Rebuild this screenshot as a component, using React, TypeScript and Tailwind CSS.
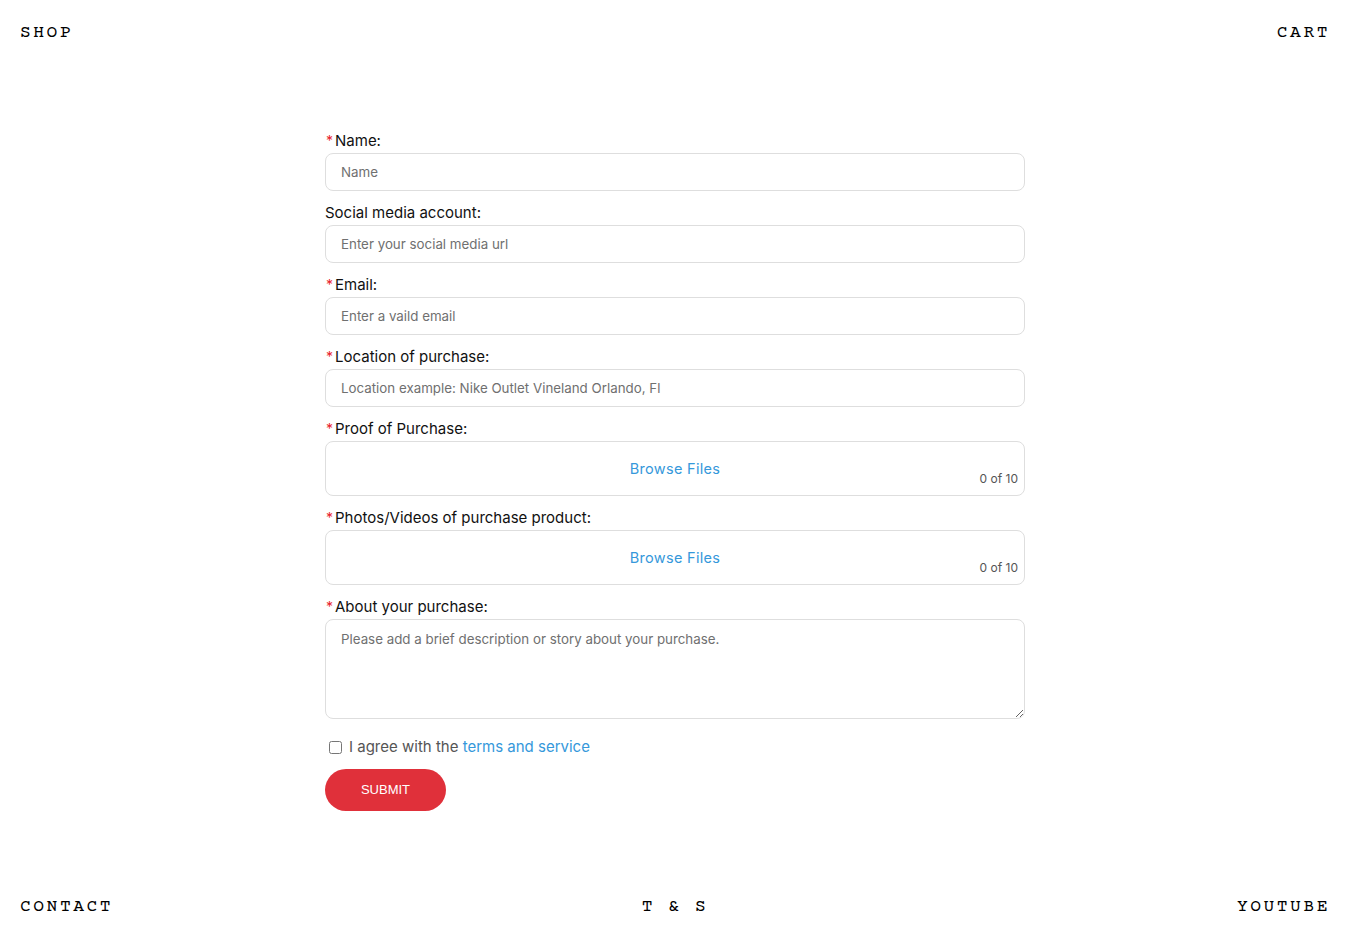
import React, { useState } from 'react';

const mono = {
  fontFamily:
    '"Courier 10 Pitch", "Courier Prime", "TeX Gyre Cursor", "Nimbus Mono", "Latin Modern Mono", "Liberation Mono", monospace',
};
const sans = { fontFamily: 'Inter, "Liberation Sans", Arial, sans-serif' };

const Label: React.FC<{ text: string; required?: boolean }> = ({ text, required }) => (
  <label className="flex items-center h-5 text-[15px] leading-5 text-[#111] mb-[2px]">
    {required && <span className="text-[#e8222b] text-[14px] leading-5 pl-[1px] mr-[2px]">*</span>}
    {text}
  </label>
);

const TextField: React.FC<{ label: string; placeholder: string; required?: boolean }> = ({
  label,
  placeholder,
  required,
}) => (
  <div className="flex flex-col">
    <Label text={label} required={required} />
    <input
      type="text"
      placeholder={placeholder}
      className="h-[38px] w-full rounded-lg border border-[#dedede] px-[15px] text-[13.333px] text-[#333] placeholder:text-[#707070] outline-none"
    />
  </div>
);

const FileField: React.FC<{ label: string }> = ({ label }) => (
  <div className="flex flex-col">
    <Label text={label} required />
    <div className="relative h-[55px] w-full rounded-lg border border-[#dedede] flex items-center justify-center">
      <button type="button" className="text-[14.5px] text-[#3598db] tracking-[0.3px]">
        Browse Files
      </button>
      <span className="absolute right-[6px] bottom-[7px] text-[12px] text-[#555]">0 of 10</span>
    </div>
  </div>
);

const navLink = 'text-[18px] leading-[22px] tracking-[2.5px] text-black';

export default function App() {
  const [agree, setAgree] = useState(false);

  return (
    <div className="min-h-[940px] flex flex-col bg-white" style={sans}>
      <header className="flex justify-between px-5 pt-[22px]" style={mono}>
        <a className={navLink}>SHOP</a>
        <a className={navLink}>CART</a>
      </header>

      <main className="flex-1 flex justify-center pt-[87px]">
        <form className="w-[700px] flex flex-col gap-[12px]" onSubmit={(e) => e.preventDefault()}>
          <TextField label="Name:" placeholder="Name" required />
          <TextField label="Social media account:" placeholder="Enter your social media url" />
          <TextField label="Email:" placeholder="Enter a vaild email" required />
          <TextField
            label="Location of purchase:"
            placeholder="Location example: Nike Outlet Vineland Orlando, Fl"
            required
          />
          <FileField label="Proof of Purchase:" />
          <FileField label="Photos/Videos of purchase product:" />
          <div className="flex flex-col">
            <Label text="About your purchase:" required />
            <textarea
              placeholder="Please add a brief description or story about your purchase."
              className="h-[100px] w-full rounded-lg border border-[#dedede] px-[15px] py-[10px] text-[13.333px] placeholder:text-[#707070] outline-none"
            />
          </div>
          <div className="flex flex-col gap-[10px] mt-[5px]">
            <label className="flex items-center gap-[7px] pl-[4px] text-[15px] text-[#555]">
              <input type="checkbox" checked={agree} onChange={(e) => setAgree(e.target.checked)} />
              <span>
                I agree with the <a className="text-[#3598db]">terms and service</a>
              </span>
            </label>
            <button
              type="submit"
              className="h-[42px] w-[121px] rounded-full bg-[#e0303a] text-white text-[13px]"
              style={{ fontFamily: '"Liberation Sans", Arial, sans-serif' }}
            >
              SUBMIT
            </button>
          </div>
        </form>
      </main>

      <footer className="flex justify-between items-center px-5 pb-[22px]" style={mono}>
        <a className={navLink}>CONTACT</a>
        <a className={navLink}>T &amp; S</a>
        <a className={navLink}>YOUTUBE</a>
      </footer>
    </div>
  );
}
